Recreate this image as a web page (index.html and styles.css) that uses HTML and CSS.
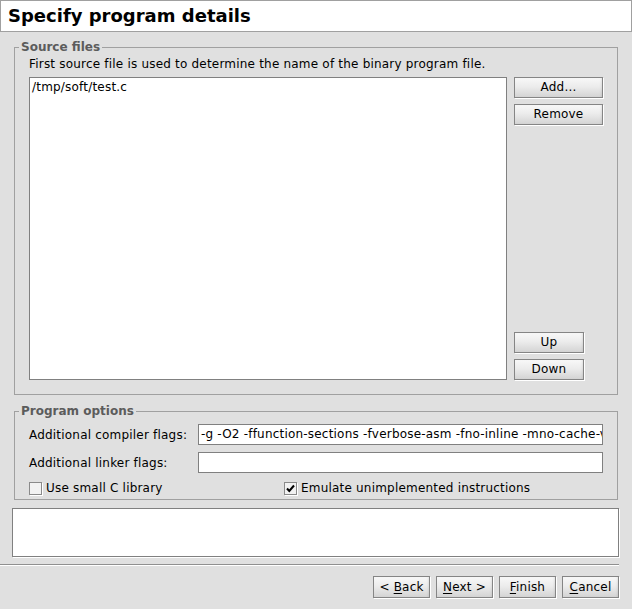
FILE: index.html
```html
<!DOCTYPE html>
<html>
<head>
<meta charset="utf-8">
<link rel="stylesheet" href="styles.css">
</head>
<body>
<div class="wizard">
  <div class="header"><h1 class="title">Specify program details</h1></div>

  <fieldset class="group group-source">
    <legend class="group-title">Source files</legend>
    <div class="group-body">
      <p class="hint">First source file is used to determine the name of the binary program file.</p>
      <div class="files">
        <div class="filelist"><div class="file">/tmp/soft/test.c</div></div>
        <div class="file-buttons">
          <div class="btn-stack">
            <button class="btn btn-wide">Add...</button>
            <button class="btn btn-wide">Remove</button>
          </div>
          <div class="btn-stack">
            <button class="btn btn-narrow">Up</button>
            <button class="btn btn-narrow">Down</button>
          </div>
        </div>
      </div>
    </div>
  </fieldset>

  <fieldset class="group group-options">
    <legend class="group-title">Program options</legend>
    <div class="group-body options-body">
      <div class="form-row">
        <span class="label">Additional compiler flags:</span>
        <div class="field"><span class="field-text">-g -O2 -ffunction-sections -fverbose-asm -fno-inline -mno-cache-volatile -mhw-mul</span></div>
      </div>
      <div class="form-row">
        <span class="label">Additional linker flags:</span>
        <div class="field"><span class="field-text"></span></div>
      </div>
      <div class="check-row">
        <label class="check check-first"><span class="box"></span><span>Use small C library</span></label>
        <label class="check"><span class="box"><svg class="tick" viewBox="0 0 11 11" width="11" height="11"><path d="M2 5.5 L4.3 8 L9 2.5" fill="none" stroke="#000" stroke-width="2"/></svg></span><span>Emulate unimplemented instructions</span></label>
      </div>
    </div>
  </fieldset>

  <div class="message"></div>

  <div class="separator"></div>

  <div class="nav">
    <button class="btn btn-nav">&lt; <u>B</u>ack</button>
    <button class="btn btn-nav"><u>N</u>ext &gt;</button>
    <button class="btn btn-nav"><u>F</u>inish</button>
    <button class="btn btn-nav"><u>C</u>ancel</button>
  </div>
</div>
</body>
</html>
```

FILE: styles.css
```css
html, body {
  margin: 0;
  padding: 0;
}
body {
  width: 632px;
  height: 609px;
  background: #e0e0e0;
  font-family: "DejaVu Sans", sans-serif;
  font-size: 12px;
  letter-spacing: 0.2px;
  color: #000;
  overflow: hidden;
}
.wizard {
  display: flex;
  flex-direction: column;
}
.header {
  box-sizing: border-box;
  height: 32px;
  background: #fff;
  border: 1px solid #a0a0a0;
  padding: 4px 0 0 7px;
}
.title {
  margin: 0;
  font-size: 18px;
  font-weight: bold;
  line-height: 21px;
  letter-spacing: 0;
}
.group {
  margin: 8px 14px 0 14px;
  padding: 0;
  border: 1px solid #a0a0a0;
  min-width: 0;
}
.group-options {
  margin-top: 9px;
}
.group-title {
  margin-left: 4px;
  padding: 0 2px;
  font-weight: bold;
  font-size: 12px;
  line-height: 14px;
  letter-spacing: 0;
  color: #5c5c5c;
}
.group-body {
  padding: 0 14px 14px 14px;
}
.hint {
  margin: 3px 0 6px 0;
  line-height: 14px;
}
.files {
  display: flex;
  gap: 7px;
  height: 303px;
}
.filelist {
  flex: 1;
  background: #fff;
  border: 1px solid #808080;
  padding: 1px 2px;
}
.file {
  line-height: 16px;
}
.file-buttons {
  width: 89px;
  display: flex;
  flex-direction: column;
  justify-content: space-between;
}
.btn-stack {
  display: flex;
  flex-direction: column;
  gap: 6px;
}
.btn {
  box-sizing: border-box;
  height: 21px;
  padding: 0;
  margin: 0;
  font-family: "DejaVu Sans", sans-serif;
  font-size: 12px;
  letter-spacing: 0.2px;
  color: #000;
  border: 1px solid #858585;
  background: linear-gradient(to bottom, #f8f8f8 0%, #ececec 45%, #d4d4d4 100%);
  box-shadow: 1px 1px 0 #fff, inset -2px 0 2px -1px rgba(0,0,0,0.08);
  line-height: 19px;
  text-align: center;
}
.btn u {
  text-decoration: underline;
  text-underline-offset: 2px;
}
.btn-wide {
  width: 89px;
}
.btn-narrow {
  width: 70px;
}
.options-body {
  padding: 6px 14px 4px 14px;
  display: flex;
  flex-direction: column;
  gap: 7px;
}
.form-row {
  display: grid;
  grid-template-columns: 169px 1fr;
  align-items: center;
}
.label {
  line-height: 14px;
}
.field {
  box-sizing: border-box;
  height: 21px;
  background: #fff;
  border: 1px solid #808080;
  overflow: hidden;
  white-space: nowrap;
  padding: 0 2px;
  line-height: 19px;
}
.check-row {
  display: flex;
  align-items: center;
  line-height: 14px;
  margin-top: 1px;
}
.check {
  display: flex;
  align-items: center;
  gap: 4px;
}
.check-first {
  width: 255px;
}
.box {
  box-sizing: border-box;
  width: 13px;
  height: 13px;
  border: 1px solid #8a8a8a;
  background: #f2f2f2;
  box-shadow: 1px 1px 0 #fff;
  display: flex;
  align-items: center;
  justify-content: center;
}
.tick {
  display: block;
}
.message {
  box-sizing: border-box;
  height: 49px;
  margin: 8px 13px 0 12px;
  background: #fff;
  border: 1px solid #808080;
  box-shadow: 1px 1px 0 #fff;
}
.separator {
  width: 619px;
  margin-top: 7px;
  border-top: 1px solid #909090;
  border-bottom: 1px solid #fff;
}
.nav {
  display: flex;
  justify-content: flex-end;
  gap: 6px;
  margin-top: 10px;
  padding-right: 13px;
}
.btn-nav {
  width: 57px;
  height: 22px;
  line-height: 20px;
}
```
